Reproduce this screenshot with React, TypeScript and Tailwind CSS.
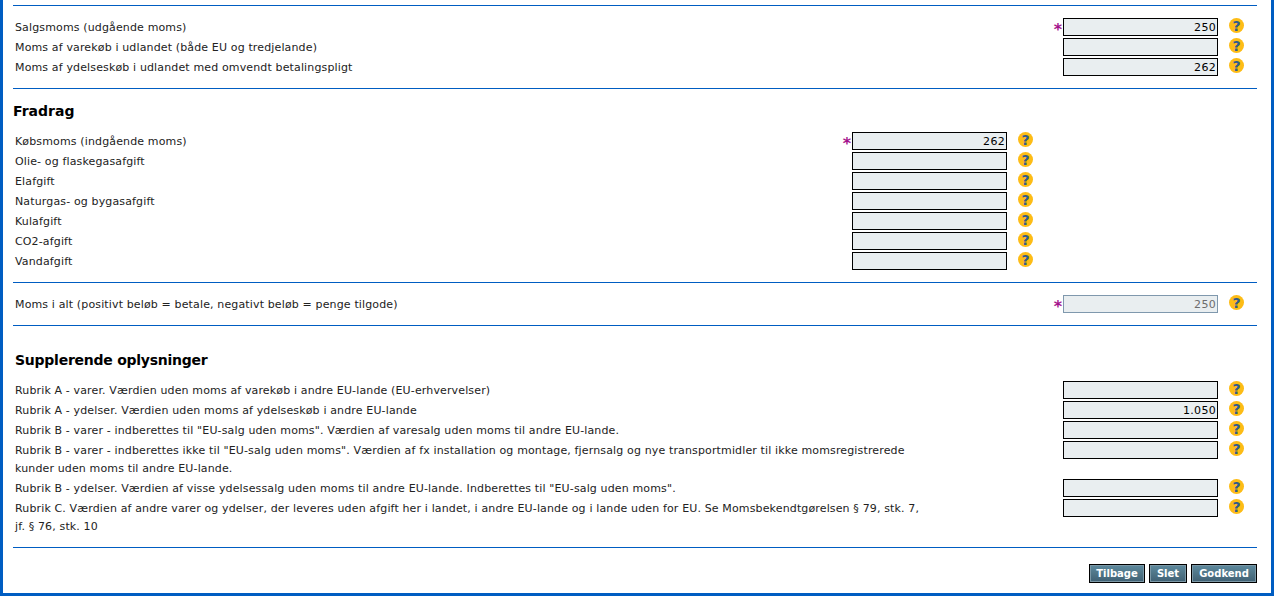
const rowsA = [
  { label: "Salgsmoms (udgående moms)", value: "250", req: true },
  { label: "Moms af varekøb i udlandet (både EU og tredjelande)", value: "" },
  { label: "Moms af ydelseskøb i udlandet med omvendt betalingspligt", value: "262" },
];
const rowsB = [
  { label: "Købsmoms (indgående moms)", value: "262", req: true },
  { label: "Olie- og flaskegasafgift", value: "" },
  { label: "Elafgift", value: "" },
  { label: "Naturgas- og bygasafgift", value: "" },
  { label: "Kulafgift", value: "" },
  { label: "CO2-afgift", value: "" },
  { label: "Vandafgift", value: "" },
];
const rowsC = [
  { label: "Rubrik A - varer. Værdien uden moms af varekøb i andre EU-lande (EU-erhvervelser)", value: "" },
  { label: "Rubrik A - ydelser. Værdien uden moms af ydelseskøb i andre EU-lande", value: "1.050" },
  { label: 'Rubrik B - varer - indberettes til "EU-salg uden moms". Værdien af varesalg uden moms til andre EU-lande.', value: "" },
  { label: 'Rubrik B - varer - indberettes ikke til "EU-salg uden moms". Værdien af fx installation og montage, fjernsalg og nye transportmidler til ikke momsregistrerede kunder uden moms til andre EU-lande.', value: "" },
  { label: 'Rubrik B - ydelser. Værdien af visse ydelsessalg uden moms til andre EU-lande. Indberettes til "EU-salg uden moms".', value: "" },
  { label: "Rubrik C. Værdien af andre varer og ydelser, der leveres uden afgift her i landet, i andre EU-lande og i lande uden for EU. Se Momsbekendtgørelsen § 79, stk. 7, jf. § 76, stk. 10", value: "" },
];

function Help() {
  return (
    <span className="ml-[11px] flex h-[15px] w-[15px] items-center justify-center rounded-full bg-[#fdbc16] text-[14px] leading-none font-bold text-[#2f5a8c]">
      ?
    </span>
  );
}

type RowProps = { label: string; value: string; req?: boolean; shift?: boolean; disabled?: boolean };

function Row({ label, value, req, shift, disabled }: RowProps) {
  return (
    <div className={`mb-[2px] flex items-start ${shift ? "pr-[224px]" : "pr-[13px]"}`}>
      <div className="mt-[1px] mb-[-1px] w-[910px] pl-[2px] text-[11px] leading-[18px] tracking-[0.14px] text-[#222222]">
        {label}
      </div>
      <div className="ml-auto flex items-start">
        {req && (
          <span className="mr-[1px] h-[18px] translate-y-[3px] text-[16px] leading-[18px] font-bold text-[#a3118c]">*</span>
        )}
        <div
          className={`h-[18px] w-[155px] border bg-[#e9eef0] pr-[1px] text-right text-[11px] leading-[17px] tracking-[0.3px] ${
            disabled ? "border-[#7f98ad] text-[#6d6d6d]" : "border-black text-black"
          }`}
        >
          {value}
        </div>
        <Help />
      </div>
    </div>
  );
}

function Button({ children, width }: { children: string; width: string }) {
  return (
    <button
      className={`h-[19px] ${width} border border-black bg-gradient-to-b from-[#5d8a9f] via-[#4f7587] to-[#3f6073] text-center text-[10px] leading-[15px] font-bold text-white shadow-[inset_0_0_0_1px_#7c98a6]`}
    >
      {children}
    </button>
  );
}

export default function App() {
  return (
    <div className="h-[598px] w-[1275px] overflow-hidden bg-white font-['Verdana','DejaVu_Sans',sans-serif]">
      <div className="h-[596px] w-[1274px] border-r-[3px] border-b-[3px] border-l-[3px] border-[#005dc2] pt-[5px] pr-[14px] pl-[10px]">
        <section className="border-t border-[#005dc2] pt-[12px] pb-[10px]">
          {rowsA.map((r) => (
            <Row key={r.label} {...r} />
          ))}
        </section>
        <section className="border-t border-[#005dc2] pb-[10px]">
          <h2 className="h-[43px] pt-[13px] text-[14px] leading-[18px] font-bold text-black">Fradrag</h2>
          {rowsB.map((r) => (
            <Row key={r.label} {...r} shift />
          ))}
        </section>
        <section className="border-t border-[#005dc2] pt-[12px] pb-[10px]">
          <Row label="Moms i alt (positivt beløb = betale, negativt beløb = penge tilgode)" value="250" req disabled />
        </section>
        <section className="border-t border-[#005dc2] pb-[10px]">
          <h2 className="h-[55px] pt-[25px] pl-[2px] text-[14px] leading-[18px] font-bold tracking-[-0.25px] text-black">
            Supplerende oplysninger
          </h2>
          {rowsC.map((r) => (
            <Row key={r.label} {...r} />
          ))}
        </section>
        <div className="flex justify-end gap-[4px] border-t border-[#005dc2] pt-[16px]">
          <Button width="w-[56px]">Tilbage</Button>
          <Button width="w-[38px]">Slet</Button>
          <Button width="w-[66px]">Godkend</Button>
        </div>
      </div>
    </div>
  );
}
